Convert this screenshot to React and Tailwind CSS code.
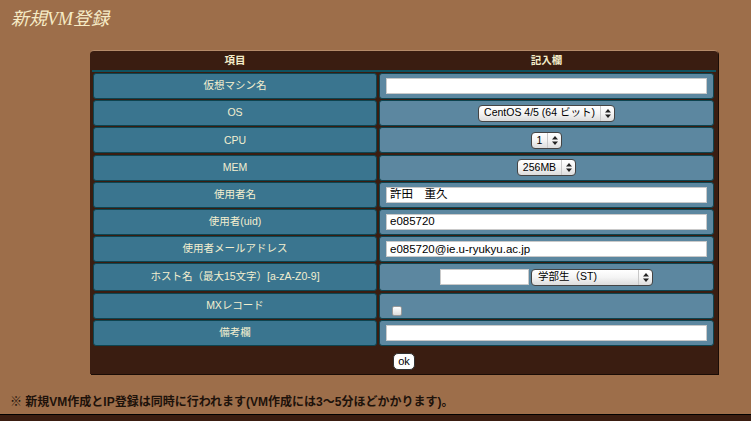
const LABEL_FONT = "font-['Liberation_Sans','Noto_Sans_CJK_JP',sans-serif]";

const Arrows = () => (
  <svg width="6" height="9" viewBox="0 0 6 9">
    <path d="M3 0 L6 3.5 H0 Z" fill="#222" />
    <path d="M3 9 L6 5.5 H0 Z" fill="#222" />
  </svg>
);

const FakeSelect = ({ value, width, align = "center" }) => (
  <div
    className={`flex h-[17px] shrink-0 items-center rounded-[4px] border border-[#444] bg-gradient-to-b from-white via-[#f4f4f4] to-[#dcdcdc] text-[10.5px] text-black ${width}`}
  >
    <span
      className={`flex-1 whitespace-nowrap ${align === "center" ? "text-center" : "pl-[6px]"}`}
    >
      {value}
    </span>
    <span className="flex h-full w-[14px] items-center justify-center border-l border-[#c8c8c8]">
      <Arrows />
    </span>
  </div>
);

const TextBox = ({ value = "", className = "w-full" }) => (
  <input
    readOnly
    value={value}
    className={`h-[16px] border border-[#c9c9c9] bg-white px-[3px] text-[11.5px] text-black outline-none ${className}`}
  />
);

const rows = [
  { label: "仮想マシン名", field: <TextBox /> },
  {
    label: "OS",
    field: (
      <div className="flex justify-center">
        <FakeSelect value="CentOS 4/5 (64 ビット)" width="w-[137px]" />
      </div>
    ),
  },
  {
    label: "CPU",
    field: (
      <div className="flex justify-center">
        <FakeSelect value="1" width="w-[31px]" />
      </div>
    ),
  },
  {
    label: "MEM",
    field: (
      <div className="flex justify-center">
        <FakeSelect value="256MB" width="w-[59px]" />
      </div>
    ),
  },
  { label: "使用者名", field: <TextBox value="許田　重久" /> },
  { label: "使用者(uid)", field: <TextBox value="e085720" /> },
  { label: "使用者メールアドレス", field: <TextBox value="e085720@ie.u-ryukyu.ac.jp" /> },
  {
    label: "ホスト名（最大15文字）[a-zA-Z0-9]",
    tall: true,
    field: (
      <div className="flex items-center justify-center gap-[2px]">
        <TextBox className="w-[89px]" />
        <FakeSelect value="学部生（ST)" width="w-[122px]" align="left" />
      </div>
    ),
  },
  {
    label: "MXレコード",
    field: (
      <div className="flex items-end pl-[6px] pt-[10px]">
        <span className="block h-[10px] w-[10px] rounded-[2px] border border-[#999] bg-gradient-to-b from-white to-[#ddd]" />
      </div>
    ),
  },
  { label: "備考欄", field: <TextBox /> },
];

export default function App() {
  return (
    <div className="flex h-[421px] w-full flex-col overflow-hidden bg-[#9d6e4a]">
      <h1 className="h-[50px] shrink-0 pl-[11px] pt-[6px] font-['Liberation_Serif','Noto_Sans_CJK_JP',serif] text-[18px] italic text-[#f6ebc6]">
        新規VM登録
      </h1>

      <div className="ml-[90px] w-[628px] shrink-0 rounded-t-[4px] border-t border-[#b58b6a] bg-[#3a1d11] pb-[4px] shadow-[1px_1px_0_#1a0c06]">
        <div
          className={`grid h-[19px] grid-cols-[284px_335px] items-center gap-x-[2px] pl-[3px] text-center text-[10.5px] font-bold text-[#f3ecc9] ${LABEL_FONT}`}
        >
          <span>項目</span>
          <span>記入欄</span>
        </div>
        <div className="mx-[2px] h-[2px] bg-[#0f5260]" />

        <div className="mt-[1px] flex flex-col gap-[1.2px] pl-[3px]">
          {rows.map((row) => (
            <div
              key={row.label}
              className={`grid grid-cols-[284px_335px] gap-x-[2px] ${row.tall ? "h-[28px]" : "h-[26px]"}`}
            >
              <div
                className={`flex items-center justify-center rounded-[3px] border border-[#0d4450] bg-[#3a758f] text-[10.5px] text-[#f3efcf] ${LABEL_FONT}`}
              >
                {row.label}
              </div>
              <div className="flex flex-col justify-center rounded-[3px] border border-[#0d4450] bg-[#5c87a0] px-[6px] font-['Liberation_Sans','Noto_Sans_CJK_JP',sans-serif]">
                {row.field}
              </div>
            </div>
          ))}
        </div>

        <div className="grid grid-cols-[284px_335px] gap-x-[2px] pl-[3px] pt-[7px]">
          <span />
          <div className="flex pl-[14px]">
            <button className="flex h-[17px] w-[22px] items-center justify-center rounded-[5px] border border-[#333] bg-white font-['Liberation_Sans',sans-serif] text-[11px] leading-none text-black">
              ok
            </button>
          </div>
        </div>
      </div>

      <p className="mt-[20px] shrink-0 pl-[10px] font-['Liberation_Sans','Noto_Sans_CJK_JP',sans-serif] text-[12px] font-bold leading-[16px] text-[#1e120a]">
        ※ 新規VM作成とIP登録は同時に行われます(VM作成には3〜5分ほどかかります)。
      </p>

      <div className="mt-auto h-[7px] shrink-0 border-t border-black bg-[#3a1d11]" />
    </div>
  );
}
